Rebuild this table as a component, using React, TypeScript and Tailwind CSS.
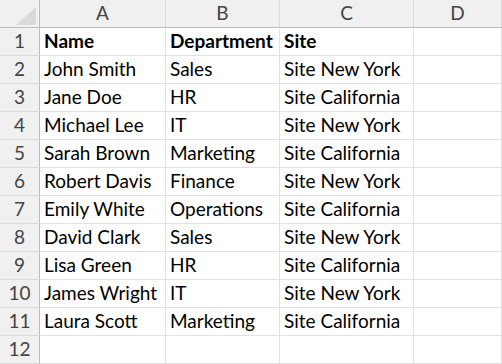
import React from "react"

const cols = ["A", "B", "C", "D"]

const rows: string[][] = [
  ["Name", "Department", "Site"],
  ["John Smith", "Sales", "Site New York"],
  ["Jane Doe", "HR", "Site California"],
  ["Michael Lee", "IT", "Site New York"],
  ["Sarah Brown", "Marketing", "Site California"],
  ["Robert Davis", "Finance", "Site New York"],
  ["Emily White", "Operations", "Site California"],
  ["David Clark", "Sales", "Site New York"],
  ["Lisa Green", "HR", "Site California"],
  ["James Wright", "IT", "Site New York"],
  ["Laura Scott", "Marketing", "Site California"],
  ["", "", ""],
]

export default function App() {
  return (
    <div
      className="w-[502px] h-[364px] overflow-hidden bg-white text-black"
      style={{ fontFamily: "Lato, 'Open Sans', sans-serif" }}
    >
      <div className="grid grid-cols-[40px_126px_114px_134px_1fr]">
        {/* corner */}
        <div className="h-[28px] bg-[#f0f0f0] border-r border-b border-[#bdbdbd] flex items-end justify-end pr-[3px] pb-[2px]">
          <svg width="20" height="18" viewBox="0 0 20 18">
            <polygon points="20,0 20,18 0,18" fill="#dadada" />
          </svg>
        </div>
        {cols.map((c) => (
          <div
            key={c}
            className="h-[28px] bg-[#f0f0f0] border-r border-[#dadada] border-b-[1px] border-b-[#bdbdbd] flex items-center justify-center text-[19px] text-[#444]"
          >
            {c}
          </div>
        ))}

        {rows.map((r, i) => (
          <React.Fragment key={i}>
            <div className="h-[28px] bg-[#f0f0f0] border-r border-r-[#bdbdbd] border-b border-b-[#dadada] flex items-center justify-center text-[19px] text-[#444]">
              {i + 1}
            </div>
            {[...r, ""].map((v, j) => (
              <div
                key={j}
                className={`h-[28px] border-r border-b border-[#e1e1e1] flex items-center pl-[4px] whitespace-nowrap text-[19px] ${
                  i === 0 ? "font-bold" : ""
                }`}
              >
                {v}
              </div>
            ))}
          </React.Fragment>
        ))}
      </div>
    </div>
  )
}
